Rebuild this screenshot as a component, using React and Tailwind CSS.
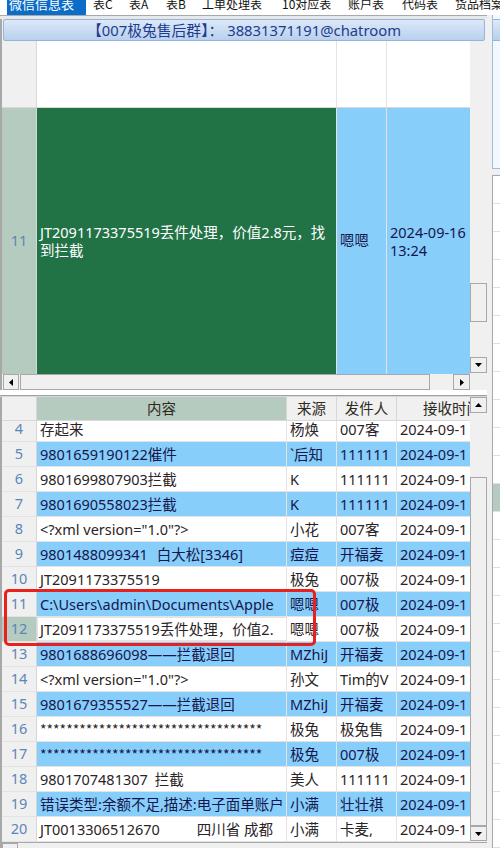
import React from "react";

const stars = <span className="font-['Noto_Sans_CJK_SC',sans-serif] text-[14px]">{"*".repeat(34)}</span>;

const rows = [
  { n: 4, c: "存起来", s: "杨焕", f: "007客", b: 0 },
  { n: 5, c: "9801659190122催件", s: "`后知", f: "111111", b: 1 },
  { n: 6, c: "9801699807903拦截", s: "K", f: "111111", b: 0 },
  { n: 7, c: "9801690558023拦截", s: "K", f: "111111", b: 1 },
  { n: 8, c: '<?xml version="1.0"?>', s: "小花", f: "007客", b: 0 },
  { n: 9, c: (<>9801488099341<span className="ml-[9px]">白大松[3346]</span></>), s: "痘痘", f: "开福麦", b: 1 },
  { n: 10, c: "JT2091173375519", s: "极兔", f: "007极", b: 0 },
  { n: 11, c: "C:\\Users\\admin\\Documents\\Apple", s: "嗯嗯", f: "007极", b: 1 },
  { n: 12, c: "JT2091173375519丢件处理，价值2.", s: "嗯嗯", f: "007极", b: 0, sel: 1 },
  { n: 13, c: "9801688696098——拦截退回", s: "MZhiJ", f: "开福麦", b: 1 },
  { n: 14, c: '<?xml version="1.0"?>', s: "孙文", f: "Tim的V", b: 0 },
  { n: 15, c: "9801679355527——拦截退回", s: "MZhiJ", f: "开福麦", b: 1 },
  { n: 16, c: stars, s: "极兔", f: "极兔售", b: 0 },
  { n: 17, c: stars, s: "极兔", f: "007极", b: 1 },
  { n: 18, c: (<>9801707481307<span className="ml-[7px]">拦截</span></>), s: "美人", f: "111111", b: 0 },
  { n: 19, c: "错误类型:余额不足,描述:电子面单账户", s: "小满", f: "壮壮祺", b: 1 },
  { n: 20, c: (<>JT0013306512670<span className="ml-[37px]">四川省 成都</span></>), s: "小满", f: "卡麦,", b: 0 },
];

function Tri({ dir }) {
  const pts = {
    down: "0,0 7,0 3.5,4",
    up: "0,4 7,4 3.5,0",
    left: "4,0 4,7 0,3.5",
    right: "0,0 0,7 4,3.5",
  }[dir];
  const vertical = dir === "down" || dir === "up";
  return (
    <svg width={vertical ? 7 : 4} height={vertical ? 4 : 7} viewBox={vertical ? "0 0 7 4" : "0 0 4 7"}>
      <polygon points={pts} fill="#000" />
    </svg>
  );
}

function ArrowBox({ dir, cls }) {
  return (
    <div className={`flex items-center justify-center bg-[#f0f0f0] border border-[#a8a8a8] ${cls}`}>
      <Tri dir={dir} />
    </div>
  );
}

function Row({ r }) {
  const bg = r.b ? "bg-[#87cefa]" : "bg-white";
  const tc = r.b ? "text-[#16164e]" : "text-[#2b2426]";
  return (
    <div className={`flex h-[25px] border-b border-[#e3e3e3] ${bg} ${tc}`}>
      <div
        className={`w-[35px] shrink-0 border-r border-[#d6d6d6] flex items-center justify-center text-[#5a86b8] ${
          r.sel ? "bg-[#b5cbbf]" : "bg-[#f0f0f0]"
        }`}
      >
        {r.n}
      </div>
      <div
        className={`w-[250px] shrink-0 border-r border-[#e3e3e3] overflow-hidden whitespace-nowrap leading-[22px] ${
          r.sel ? "border border-[#217346] bg-white pl-[2px]" : "pl-[3px] pt-px"
        }`}
      >
        {r.c}
      </div>
      <div className="w-[50px] shrink-0 border-r border-[#e3e3e3] overflow-hidden whitespace-nowrap pl-[3px] leading-[24px]">
        {r.s}
      </div>
      <div className="w-[60px] shrink-0 border-r border-[#e3e3e3] overflow-hidden whitespace-nowrap pl-[3px] leading-[24px]">
        {r.f}
      </div>
      <div className="flex-1 overflow-hidden whitespace-nowrap pl-[3px] leading-[24px]">2024-09-1</div>
    </div>
  );
}

function Tabs() {
  const tabs = [
    ["表C", "w-[36px]"],
    ["表A", "w-[37px]"],
    ["表B", "w-[36px]"],
    ["工单处理表", "w-[80px]"],
    ["10对应表", "w-[66px]"],
    ["账户表", "w-[54px]"],
    ["代码表", "w-[53px]"],
    ["货品档案", "flex-1"],
  ];
  return (
    <div className="h-[15px] flex overflow-hidden bg-white font-['Noto_Sans_CJK_SC',sans-serif]">
      <div className="ml-[7px] w-[79px] h-[15px] bg-[#0b6dc8] text-white text-[13px] pl-[2px] overflow-hidden whitespace-nowrap">
        <div className="leading-[16px] -mt-[4px]">微信信息表</div>
      </div>
      <div className="w-[7px]" />
      {tabs.map(([t, w]) => (
        <div key={t} className={`${w} h-[15px] text-[12px] text-[#111] overflow-hidden whitespace-nowrap`}>
          <div className="leading-[16px] -mt-[4px]">{t}</div>
        </div>
      ))}
    </div>
  );
}

function RightStrip() {
  const lines = Array.from({ length: 24 });
  return (
    <div className="w-[13px] h-[833px] bg-[#f0f0f0] flex flex-col overflow-hidden">
      <div className="h-[173px] ml-[5px] border-l border-b border-[#9fbbe0] bg-[#f3f8fe] flex flex-col">
        <div className="h-[4px]" />
        <div className="h-[22px] bg-gradient-to-b from-[#dce9f8] to-[#b8cfee] border-y border-[#92b4dd]" />
      </div>
      <div className="h-[7px]" />
      <div className="flex-1 ml-[5px] border-l border-t border-[#a8a8a8] bg-white flex flex-col">
        {lines.map((_, i) => (
          <div
            key={i}
            className={`h-[28px] shrink-0 border-b border-[#e0e0e0] ${i === 11 ? "bg-[#b5cbbf]" : ""}`}
          />
        ))}
      </div>
    </div>
  );
}

export default function App() {
  return (
    <div className="w-[500px] h-[848px] overflow-hidden bg-white relative font-['Noto_Sans','Noto_Sans_CJK_SC',sans-serif] text-[14.5px]">
      <Tabs />
      <div className="flex h-[833px]">
        <div className="w-[487px] flex flex-col">
          {/* separator under tabs */}
          <div className="h-[4px] border-t border-[#a8a8a8] bg-[#e8e8e8]" />
          {/* title bar */}
          <div className="h-[22px] border-l-2 border-[#a8a8a8] bg-[#f0f0f0] flex">
            <div className="ml-[1px] w-[482px] h-[22px] rounded-[2px] border border-[#92b4dd] bg-gradient-to-b from-[#dce9f8] to-[#b9d0ee] flex items-center justify-center text-[14.8px] text-[#1f3c8e] whitespace-nowrap leading-[20px]">
              【007极兔售后群】： 38831371191@chatroom
            </div>
          </div>
          {/* top grid */}
          <div className="h-[333px] border-l-2 border-[#a8a8a8] flex">
            <div className="w-[468px] flex flex-col">
              <div className="h-[67px] flex border-b border-[#d8d8d8] bg-white">
                <div className="w-[35px] bg-[#f0f0f0] border-r border-[#d8d8d8]" />
                <div className="w-[300px] border-r border-[#e3e3e3]" />
                <div className="w-[50px] border-r border-[#e3e3e3]" />
                <div className="flex-1" />
              </div>
              <div className="h-[266px] flex">
                <div className="w-[35px] bg-[#b5cbbf] border-r border-[#d8d8d8] flex items-center justify-center text-[#5a86b8]">
                  11
                </div>
                <div className="w-[300px] bg-[#217346] border-r border-[#e3e3e3] text-white flex items-center pl-[3px] leading-[18px]">
                  JT2091173375519丢件处理，价值2.8元，找到拦截
                </div>
                <div className="w-[50px] bg-[#87cefa] border-r border-[#e3e3e3] text-[#16164e] flex items-center pl-[3px]">
                  嗯嗯
                </div>
                <div className="flex-1 bg-[#87cefa] text-[#16164e] flex items-center pl-[3px] leading-[18px]">
                  2024-09-16
                  <br />
                  13:24
                </div>
              </div>
            </div>
            <div className="w-[17px] bg-[#f0f0f0] flex flex-col">
              <div className="h-[242px]" />
              <div className="h-[39px] border border-[#a8a8a8] bg-[#f0f0f0]" />
              <div className="h-[35px]" />
              <ArrowBox dir="down" cls="h-[16px]" />
            </div>
          </div>
          {/* top horizontal scrollbar */}
          <div className="h-[16px] border-l-2 border-[#a8a8a8] bg-[#f0f0f0] flex">
            <ArrowBox dir="left" cls="ml-[1px] w-[16px] h-[16px]" />
            <div className="ml-px w-[410px] h-[16px] border border-[#a8a8a8]" />
            <div className="w-[23px]" />
            <ArrowBox dir="right" cls="w-[17px] h-[16px]" />
            <div className="flex-1" />
          </div>
          <div className="h-[5px] bg-white" />
          <div className="h-[2px] border-t border-[#a0a0a0] bg-[#d8d8d8]" />
          {/* bottom grid */}
          <div className="h-[445px] border-l-2 border-[#a8a8a8] flex">
            <div className="w-[468px] flex flex-col">
              <div className="h-[24px] flex border-b border-[#d8d8d8] text-[#2e2a22] leading-[23px]">
                <div className="w-[35px] shrink-0 bg-[#f0f0f0] border-r border-[#d6d6d6]" />
                <div className="w-[250px] shrink-0 bg-[#b5cbbf] border-r border-[#d6d6d6] text-center">内容</div>
                <div className="w-[50px] shrink-0 bg-[#f0f0f0] border-r border-[#d6d6d6] text-center">来源</div>
                <div className="w-[60px] shrink-0 bg-[#f0f0f0] border-r border-[#d6d6d6] text-center">发件人</div>
                <div className="flex-1 bg-[#f0f0f0] pl-[26px] whitespace-nowrap overflow-hidden">接收时间</div>
              </div>
              <div className="h-[421px] overflow-hidden">
                <div className="-mt-[4px]">
                  {rows.map((r) => (
                    <Row key={r.n} r={r} />
                  ))}
                </div>
              </div>
            </div>
            <div className="w-[17px] bg-[#f0f0f0] flex flex-col">
              <ArrowBox dir="up" cls="h-[16px]" />
              <div className="h-[64px]" />
              <div className="h-[349px] border border-[#a8a8a8] bg-[#f0f0f0]" />
              <ArrowBox dir="down" cls="h-[15px]" />
            </div>
          </div>
          {/* bottom horizontal scrollbar */}
          <div className="h-[6px] border-l-2 border-t border-[#a8a8a8] bg-[#f0f0f0] flex">
            <div className="w-[16px] h-[10px] border border-[#a8a8a8]" />
          </div>
        </div>
        <RightStrip />
      </div>
      {/* red highlight */}
      <div className="absolute left-[4px] top-[589px] w-[312px] h-[57px] border-[3px] border-[#e8201e] rounded-[5px]" />
    </div>
  );
}
